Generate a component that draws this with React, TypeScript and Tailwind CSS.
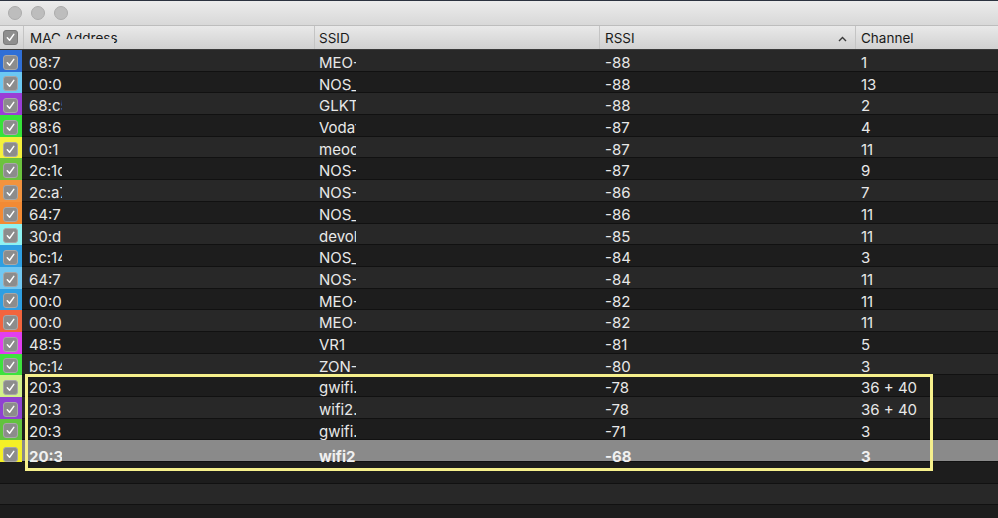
import React from "react";

type Row = { c: string; mac: string; ssid: string; rssi: string; ch: string };

const rows: Row[] = [
  { c: "#2f6fd6", mac: "08:7", ssid: "MEO-", rssi: "-88", ch: "1" },
  { c: "#6cc8f2", mac: "00:0", ssid: "NOS_", rssi: "-88", ch: "13" },
  { c: "#9a3ed6", mac: "68:c5", ssid: "GLKTx", rssi: "-88", ch: "2" },
  { c: "#36e23a", mac: "88:6", ssid: "Vodaf", rssi: "-87", ch: "4" },
  { c: "#f4f03c", mac: "00:1", ssid: "meoc", rssi: "-87", ch: "11" },
  { c: "#6cc23e", mac: "2c:1c", ssid: "NOS-", rssi: "-87", ch: "9" },
  { c: "#f2933e", mac: "2c:a7", ssid: "NOS-", rssi: "-86", ch: "7" },
  { c: "#f28a34", mac: "64:7", ssid: "NOS_", rssi: "-86", ch: "11" },
  { c: "#8ef2f2", mac: "30:d", ssid: "devolo", rssi: "-85", ch: "11" },
  { c: "#2f9fe2", mac: "bc:14", ssid: "NOS_", rssi: "-84", ch: "3" },
  { c: "#72c8f2", mac: "64:7", ssid: "NOS-", rssi: "-84", ch: "11" },
  { c: "#2f9fe2", mac: "00:0", ssid: "MEO-", rssi: "-82", ch: "11" },
  { c: "#f2643e", mac: "00:0", ssid: "MEO-", rssi: "-82", ch: "11" },
  { c: "#e23ef0", mac: "48:5", ssid: "VR1", rssi: "-81", ch: "5" },
  { c: "#3ee23e", mac: "bc:14", ssid: "ZON-", rssi: "-80", ch: "3" },
  { c: "#d2f08a", mac: "20:3", ssid: "gwifi.", rssi: "-78", ch: "36 + 40" },
  { c: "#8f42d2", mac: "20:3", ssid: "wifi2.", rssi: "-78", ch: "36 + 40" },
  { c: "#62c23e", mac: "20:3", ssid: "gwifi.", rssi: "-71", ch: "3" },
  { c: "#f4f026", mac: "20:3", ssid: "wifi2", rssi: "-68", ch: "3" },
];

function Check({ header }: { header?: boolean }) {
  return (
    <div
      className={
        "w-[15px] h-[15px] rounded-[3px] flex items-center justify-center border " +
        (header ? "bg-[#8e8e8e] border-[#7a7a7a]" : "bg-[#8c8c8c] border-[#a8a8a8]")
      }
    >
      <svg width="11" height="11" viewBox="0 0 12 12" fill="none">
        <path d="M2.5 6.3 L5 9 L9.6 2.6" stroke="#ffffff" strokeWidth="1.6" strokeLinecap="round" strokeLinejoin="round" />
      </svg>
    </div>
  );
}

export default function App() {
  return (
    <div
      className="relative w-[998px] h-[518px] overflow-hidden bg-[#1c1c1c] flex flex-col"
      style={{ fontFamily: "Inter, 'Liberation Sans', sans-serif" }}
    >
      {/* title bar */}
      <div className="h-[26px] shrink-0 border-t border-[#2c3340] border-b border-b-[#bdbdbd] bg-gradient-to-b from-[#ececec] to-[#d8d8d8] flex items-center gap-[9px] pl-[8px]">
        <div className="w-[14px] h-[14px] rounded-full bg-[#bdbdbd] border border-[#acacac]" />
        <div className="w-[14px] h-[14px] rounded-full bg-[#bdbdbd] border border-[#acacac]" />
        <div className="w-[14px] h-[14px] rounded-full bg-[#bdbdbd] border border-[#acacac]" />
      </div>

      {/* header */}
      <div className="relative h-[24px] shrink-0 grid grid-cols-[24px_291px_285px_256px_142px] bg-gradient-to-b from-[#e9e9e9] to-[#d1d1d1] border-b border-[#3a3a3a] text-[13.5px] text-[#1a1a1a]">
        <div className="flex items-center pl-[3px] border-r border-[#c4c4c4]">
          <Check header />
        </div>
        <div className="flex items-center pl-[6px] pt-[2px] border-r border-[#c4c4c4]">MAC Address</div>
        <div className="flex items-center pl-[4px] pt-[2px] border-r border-[#c4c4c4]">SSID</div>
        <div className="flex items-center justify-between pl-[5px] pt-[2px] pr-[8px] border-r border-[#c4c4c4]">
          <span>RSSI</span>
          <svg width="9" height="6" viewBox="0 0 9 6" fill="none">
            <path d="M1 5 L4.5 1.5 L8 5" stroke="#3a3a3a" strokeWidth="1.4" />
          </svg>
        </div>
        <div className="flex items-center pl-[5px] pt-[2px]">Channel</div>
        {/* obscured part of "Address" */}
        <div className="absolute left-[52px] top-[13px] w-[62px] h-[10px] bg-gradient-to-b from-[#dadada] to-[#d2d2d2]" />
      </div>

      {/* rows */}
      <div className="flex flex-col text-[15px] text-[#e8e8e8]">
        {rows.map((r, i) => {
          const sel = i === rows.length - 1;
          const bg = sel ? "bg-[#8a8a8a]" : i % 2 === 0 ? "bg-[#282828]" : "bg-[#1d1d1d]";
          const cell = sel ? " pt-[6px] font-bold text-[#f0f0f0]" : " pt-[2px]";
          return (
            <div
              key={i}
              className={
                "h-[21.7px] shrink-0 grid grid-cols-[22px_293px_285px_256px_142px] border-b border-[#111111] " + bg
              }
            >
              <div className="flex items-center pl-[3px] h-full" style={{ backgroundColor: r.c }}>
                <Check />
              </div>
              <div className={"flex items-center pl-[7px]" + cell}>
                <span className="block w-[33px] overflow-hidden whitespace-nowrap">{r.mac}</span>
              </div>
              <div className={"flex items-center pl-[4px]" + cell}>
                <span className="block w-[37px] overflow-hidden whitespace-nowrap">{r.ssid}</span>
              </div>
              <div className={"flex items-center pl-[5px]" + cell}>{r.rssi}</div>
              <div className={"flex items-center pl-[5px]" + cell}>{r.ch}</div>
            </div>
          );
        })}
        <div className="h-[21.7px] shrink-0 bg-[#1d1d1d] border-b border-[#111111]" />
        <div className="h-[21.7px] shrink-0 bg-[#282828] border-b border-[#111111]" />
        <div className="h-[21.7px] shrink-0 bg-[#1d1d1d] border-b border-[#111111]" />
      </div>

      {/* highlight box */}
      <div className="absolute left-[25px] top-[374px] w-[908px] h-[97px] border-[3px] border-[#f6f08c]" />
    </div>
  );
}
